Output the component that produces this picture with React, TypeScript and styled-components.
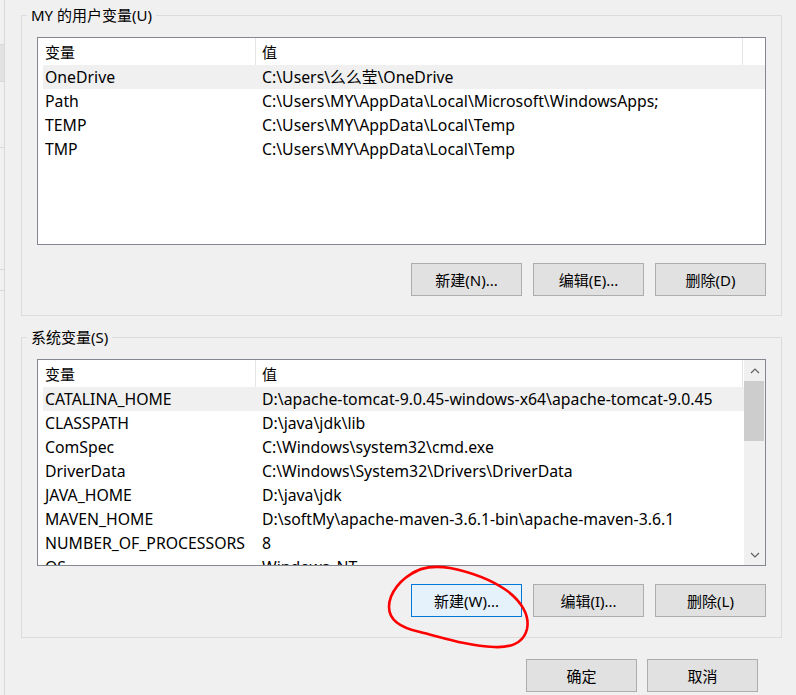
import styled, { createGlobalStyle } from 'styled-components';

interface EnvVar {
  name: string;
  value: string;
}

const userVars: EnvVar[] = [
  { name: 'OneDrive', value: 'C:\\Users\\么么莹\\OneDrive' },
  { name: 'Path', value: 'C:\\Users\\MY\\AppData\\Local\\Microsoft\\WindowsApps;' },
  { name: 'TEMP', value: 'C:\\Users\\MY\\AppData\\Local\\Temp' },
  { name: 'TMP', value: 'C:\\Users\\MY\\AppData\\Local\\Temp' },
];

const systemVars: EnvVar[] = [
  { name: 'CATALINA_HOME', value: 'D:\\apache-tomcat-9.0.45-windows-x64\\apache-tomcat-9.0.45' },
  { name: 'CLASSPATH', value: 'D:\\java\\jdk\\lib' },
  { name: 'ComSpec', value: 'C:\\Windows\\system32\\cmd.exe' },
  { name: 'DriverData', value: 'C:\\Windows\\System32\\Drivers\\DriverData' },
  { name: 'JAVA_HOME', value: 'D:\\java\\jdk' },
  { name: 'MAVEN_HOME', value: 'D:\\softMy\\apache-maven-3.6.1-bin\\apache-maven-3.6.1' },
  { name: 'NUMBER_OF_PROCESSORS', value: '8' },
  { name: 'OS', value: 'Windows_NT' },
];

// strips of the window lying behind the dialog
const backSegments = [
  { h: 45 },
  { h: 37, dark: true },
  { h: 66 },
  { h: 122 },
  { h: 21 },
];

function Chevron({ down }: { down?: boolean }) {
  return (
    <svg width="10" height="6" viewBox="0 0 10 6">
      <polyline
        points={down ? '1,1 5,5 9,1' : '1,5 5,1 9,5'}
        fill="none"
        stroke="#606060"
        strokeWidth="1.2"
      />
    </svg>
  );
}

function VarList({ vars, height, scroll }: { vars: EnvVar[]; height: number; scroll?: boolean }) {
  return (
    <ListBox $height={height}>
      <ListContent>
        <HeaderRow>
          <HeaderCell $first>变量</HeaderCell>
          <HeaderCell>值</HeaderCell>
        </HeaderRow>
        {vars.map((v, i) => (
          <Row key={v.name} $selected={i === 0}>
            <Cell $first>{v.name}</Cell>
            <Cell>{v.value}</Cell>
          </Row>
        ))}
      </ListContent>
      {scroll && (
        <ScrollBar>
          <ScrollArrow>
            <Chevron />
          </ScrollArrow>
          <ScrollThumb />
          <ScrollTrack />
          <ScrollArrow>
            <Chevron down />
          </ScrollArrow>
        </ScrollBar>
      )}
    </ListBox>
  );
}

export default function App() {
  return (
    <>
      <GlobalStyle />
      <Page>
        <BackWindow>
          {backSegments.map((s, i) => (
            <BackSegment key={i} $h={s.h} $dark={s.dark} />
          ))}
        </BackWindow>
        <Dialog>
          <GroupBox>
            <Legend>MY 的用户变量(U)</Legend>
            <VarList vars={userVars} height={208} />
            <ButtonRow>
              <Button>新建(N)...</Button>
              <Button>编辑(E)...</Button>
              <Button>删除(D)</Button>
            </ButtonRow>
          </GroupBox>
          <GroupBox $second>
            <Legend>系统变量(S)</Legend>
            <VarList vars={systemVars} height={207} scroll />
            <ButtonRow>
              <Button $focused>新建(W)...</Button>
              <Button>编辑(I)...</Button>
              <Button>删除(L)</Button>
            </ButtonRow>
          </GroupBox>
          <Footer>
            <Button>确定</Button>
            <Button>取消</Button>
          </Footer>
        </Dialog>
        <Annotation width="160" height="95" viewBox="380 560 160 95">
          <path
            d="M417 571 C401 578 389 593 389 607 C389 621 401 628 420 632 C444 638 468 646 494 647 C514 648 524 641 527 629 C530 615 521 601 506 590 C490 579 470 572 450 568 C432 565 418 568 408 576"
            fill="none"
            stroke="#ff0000"
            strokeWidth="2.6"
            strokeLinecap="round"
          />
        </Annotation>
      </Page>
    </>
  );
}

const GlobalStyle = createGlobalStyle`
  * {
    box-sizing: border-box;
  }

  html,
  body {
    margin: 0;
    padding: 0;
    background: #f0f0f0;
  }

  body {
    font-family: 'Noto Sans', 'Noto Sans CJK SC', sans-serif;
    font-size: 15px;
    color: #000;
    overflow: hidden;
  }
`;

const Page = styled.div`
  position: relative;
  display: flex;
  width: 796px;
  height: 695px;
  overflow: hidden;
  background: #f0f0f0;
`;

const BackWindow = styled.div`
  display: flex;
  flex-direction: column;
  width: 5px;
  flex-shrink: 0;
  border-right: 1px solid #d9d9d9;
`;

const BackSegment = styled.div<{ $h: number; $dark?: boolean }>`
  height: ${({ $h }) => $h}px;
  border-bottom: 1px solid #dadada;
  background: ${({ $dark }) => ($dark ? '#e2e2e2' : '#f0f0f0')};
`;

const Dialog = styled.div`
  display: flex;
  flex-direction: column;
  flex: 1;
  padding: 5px 14px 0 16px;
`;

const GroupBox = styled.fieldset<{ $second?: boolean }>`
  margin: ${({ $second }) => ($second ? '11px 0 0' : '0')};
  padding: 12px 15px ${({ $second }) => ($second ? '20px' : '19px')};
  border: 1px solid #dcdcdc;
  min-width: 0;
`;

const Legend = styled.legend`
  margin-left: -10px;
  padding: 0 4px;
  line-height: 20px;
  font-size: 15px;
`;

const ListBox = styled.div<{ $height: number }>`
  display: flex;
  height: ${({ $height }) => $height}px;
  border: 1px solid #828790;
  background: #fff;
  overflow: hidden;
`;

const ListContent = styled.div`
  flex: 1;
  padding-left: 5px;
  overflow: hidden;
`;

const HeaderRow = styled.div`
  display: grid;
  grid-template-columns: 212px 488px;
  height: 27px;
`;

const HeaderCell = styled.div<{ $first?: boolean }>`
  display: flex;
  align-items: center;
  padding-left: ${({ $first }) => ($first ? '2px' : '6px')};
  border-left: ${({ $first }) => ($first ? 'none' : '1px solid #e5e5e5')};
  border-right: ${({ $first }) => ($first ? 'none' : '1px solid #e5e5e5')};
`;

const Row = styled.div<{ $selected?: boolean }>`
  display: grid;
  grid-template-columns: 212px 488px;
  height: 24px;
  align-items: center;
  background: ${({ $selected }) => ($selected ? '#f0f0f0' : 'transparent')};
`;

const Cell = styled.div<{ $first?: boolean }>`
  padding-left: ${({ $first }) => ($first ? '2px' : '7px')};
  font-size: 15.8px;
  white-space: nowrap;
  line-height: 24px;
`;

const ScrollBar = styled.div`
  display: flex;
  flex-direction: column;
  width: 21px;
  flex-shrink: 0;
  background: #f0f0f0;
`;

const ScrollArrow = styled.div`
  display: flex;
  align-items: center;
  justify-content: center;
  height: 21px;
`;

const ScrollThumb = styled.div`
  height: 60px;
  margin: 0 1px 0 0;
  background: #cdcdcd;
`;

const ScrollTrack = styled.div`
  flex: 1;
`;

const ButtonRow = styled.div`
  display: flex;
  justify-content: flex-end;
  gap: 11px;
  margin-top: 18px;
`;

const Footer = styled.div`
  display: flex;
  justify-content: flex-end;
  gap: 10px;
  margin-top: 21px;
  padding-right: 24px;
`;

const Button = styled.button<{ $focused?: boolean }>`
  width: 111px;
  height: 33px;
  padding: 0;
  border: 1px solid ${({ $focused }) => ($focused ? '#0078d7' : '#adadad')};
  background: ${({ $focused }) => ($focused ? '#e5f1fb' : '#e1e1e1')};
  font-family: 'Noto Sans', 'Noto Sans CJK SC', sans-serif;
  font-size: 15px;
  color: #000;
`;

const Annotation = styled.svg`
  position: absolute;
  left: 380px;
  top: 560px;
  pointer-events: none;
`;
